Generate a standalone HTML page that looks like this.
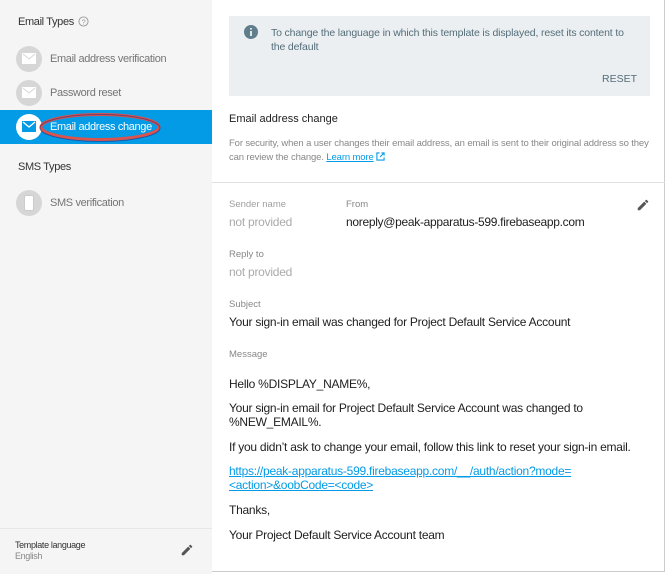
<!DOCTYPE html><html><head><meta charset="utf-8"><style>
*{margin:0;padding:0;box-sizing:border-box}
body{width:669px;height:574px;overflow:hidden;font-family:"Liberation Sans",sans-serif;background:#fff;position:relative}
.side{position:absolute;left:0;top:0;width:212px;height:574px;background:#f5f5f5}
.main{position:absolute;left:212px;top:0;width:453px;height:572px;background:#fff;border-right:1px solid #ccc;border-bottom:1px solid #ccc}
.a{position:absolute;white-space:nowrap}
.ic{position:absolute;width:26px;height:26px;border-radius:50%;background:#d6d6d6}
.lbl{font-size:12px;color:#9e9e9e}
.val{font-size:13px;color:#212121}
.side .a{letter-spacing:-0.35px}
.b{letter-spacing:-0.25px}
</style></head><body>
<div class="side">
<div class="a" style="left:18px;top:16px;font-size:11px;color:#333">Email Types</div>
<svg class="a" style="left:78px;top:16px" width="11" height="11" viewBox="0 0 12 12"><circle cx="6" cy="6" r="5" fill="none" stroke="#999" stroke-width="1"/><text x="6" y="9" font-size="8" text-anchor="middle" fill="#999" font-family="Liberation Sans">?</text></svg>
<div class="ic" style="left:16px;top:46px"></div>
<svg class="a" style="left:22px;top:53px" width="14" height="11"><rect width="14" height="11" fill="#fff"/><path d="M1 1L7 6L13 1" stroke="#d6d6d6" fill="none"/></svg>
<div class="a" style="left:50px;top:53px;font-size:11px;color:#757575">Email address verification</div>
<div class="ic" style="left:16px;top:80px"></div>
<svg class="a" style="left:22px;top:87px" width="14" height="11"><rect width="14" height="11" fill="#fff"/><path d="M1 1L7 6L13 1" stroke="#d6d6d6" fill="none"/></svg>
<div class="a" style="left:50px;top:87px;font-size:11px;color:#757575">Password reset</div>
<div class="a" style="left:0;top:110px;width:212px;height:34px;background:#039be5"></div>
<div class="ic" style="left:16px;top:114px;background:#fff"></div>
<svg class="a" style="left:22px;top:121px" width="14" height="11"><rect width="14" height="11" fill="#039be5"/><path d="M1 1L7 6L13 1" stroke="#fff" stroke-width="1.3" fill="none"/></svg>
<svg class="a" style="left:37px;top:111px" width="130" height="32"><ellipse cx="63" cy="16" rx="59" ry="12.5" fill="none" stroke="#d9534f" stroke-width="3"/><ellipse cx="63" cy="17" rx="60" ry="13.5" fill="none" stroke="#1a237e" stroke-width="1" opacity=".5"/></svg>
<div class="a" style="left:50px;top:121px;font-size:11px;color:#fff">Email address change</div>
<div class="a" style="left:18px;top:161px;font-size:11px;color:#333">SMS Types</div>
<div class="ic" style="left:16px;top:190px"></div>
<svg class="a" style="left:24px;top:195px" width="10" height="16"><rect x="0.5" y="0.5" width="9" height="15" rx="1.5" fill="#fff" stroke="#ccc"/></svg>
<div class="a" style="left:50px;top:197px;font-size:11px;color:#757575">SMS verification</div>
<div class="a" style="left:0;top:528px;width:212px;height:1px;background:#e6e6e6"></div>
<div class="a" style="left:15px;top:540px;font-size:9px;color:#333">Template language</div>
<div class="a" style="left:15px;top:551px;font-size:9px;color:#888">English</div>
<svg class="a" style="left:180px;top:543px" width="14" height="14" viewBox="0 0 24 24"><path d="M3 17.25V21h3.75L17.81 9.94l-3.75-3.75L3 17.25zM20.71 7.04a1 1 0 000-1.41l-2.34-2.34a1 1 0 00-1.41 0l-1.83 1.83 3.75 3.75 1.83-1.83z" fill="#555"/></svg>
</div>
<div class="main">
<div class="a" style="left:17px;top:16px;width:421px;height:80px;background:#eceff1"></div>
<svg class="a" style="left:32px;top:25px" width="14" height="14"><circle cx="7" cy="7" r="7" fill="#607d8b"/><rect x="6.2" y="6" width="1.6" height="5" fill="#fff"/><rect x="6.2" y="3" width="1.6" height="1.6" fill="#fff"/></svg>
<div class="a" style="left:59px;top:26px;font-size:10.5px;color:#546e7a;line-height:14px;letter-spacing:-0.15px">To change the language in which this template is displayed, reset its content to<br>the default</div>
<div class="a" style="left:390px;top:73px;font-size:10.5px;color:#546e7a">RESET</div>
<div class="a" style="left:17px;top:113px;font-size:11px;color:#212121">Email address change</div>
<div class="a" style="left:17px;top:137px;font-size:9.5px;color:#888;line-height:14px;letter-spacing:-0.13px">For security, when a user changes their email address, an email is sent to their original address so they<br>can review the change. <span style="color:#039be5;text-decoration:underline">Learn more</span> <svg width="9" height="9" viewBox="0 0 10 10" style="vertical-align:-1px"><path d="M4 1H1v8h8V6M6 1h3v3M9 1L4.5 5.5" stroke="#039be5" fill="none" stroke-width="1.2"/></svg></div>
<div class="a" style="left:0;top:182px;width:453px;height:1px;background:#e0e0e0"></div>
<div class="a lbl" style="left:17px;top:199px;font-size:9.5px">Sender name</div>
<div class="a b" style="left:17px;top:215px;font-size:12px;color:#aaa">not provided</div>
<div class="a lbl" style="left:134px;top:199px;font-size:9.5px;color:#888">From</div>
<div class="a val" style="left:134px;top:215px;font-size:12px;letter-spacing:-0.3px">noreply@peak-apparatus-599.firebaseapp.com</div>
<svg class="a" style="left:424px;top:198px" width="14" height="14" viewBox="0 0 24 24"><path d="M3 17.25V21h3.75L17.81 9.94l-3.75-3.75L3 17.25zM20.71 7.04a1 1 0 000-1.41l-2.34-2.34a1 1 0 00-1.41 0l-1.83 1.83 3.75 3.75 1.83-1.83z" fill="#555"/></svg>
<div class="a lbl" style="left:17px;top:249px;font-size:9.5px;color:#888">Reply to</div>
<div class="a b" style="left:17px;top:265px;font-size:12px;color:#aaa">not provided</div>
<div class="a lbl" style="left:17px;top:299px;font-size:9.5px;color:#888">Subject</div>
<div class="a val b" style="left:17px;top:315px;font-size:12px">Your sign-in email was changed for Project Default Service Account</div>
<div class="a lbl" style="left:17px;top:349px;font-size:9.5px;color:#888">Message</div>
<div class="a val b" style="left:17px;top:377px;font-size:12px">Hello %DISPLAY_NAME%,</div>
<div class="a val b" style="left:17px;top:401px;font-size:12px;line-height:14px">Your sign-in email for Project Default Service Account was changed to<br>%NEW_EMAIL%.</div>
<div class="a val b" style="left:17px;top:440px;font-size:12px">If you didn’t ask to change your email, follow this link to reset your sign-in email.</div>
<div class="a b" style="left:17px;top:464px;font-size:12px;line-height:14px;color:#039be5;text-decoration:underline">https://peak-apparatus-599.firebaseapp.com/__/auth/action?mode=<br>&lt;action&gt;&amp;oobCode=&lt;code&gt;</div>
<div class="a val b" style="left:17px;top:503px;font-size:12px">Thanks,</div>
<div class="a val b" style="left:17px;top:528px;font-size:12px">Your Project Default Service Account team</div>
</div>
</body></html>
